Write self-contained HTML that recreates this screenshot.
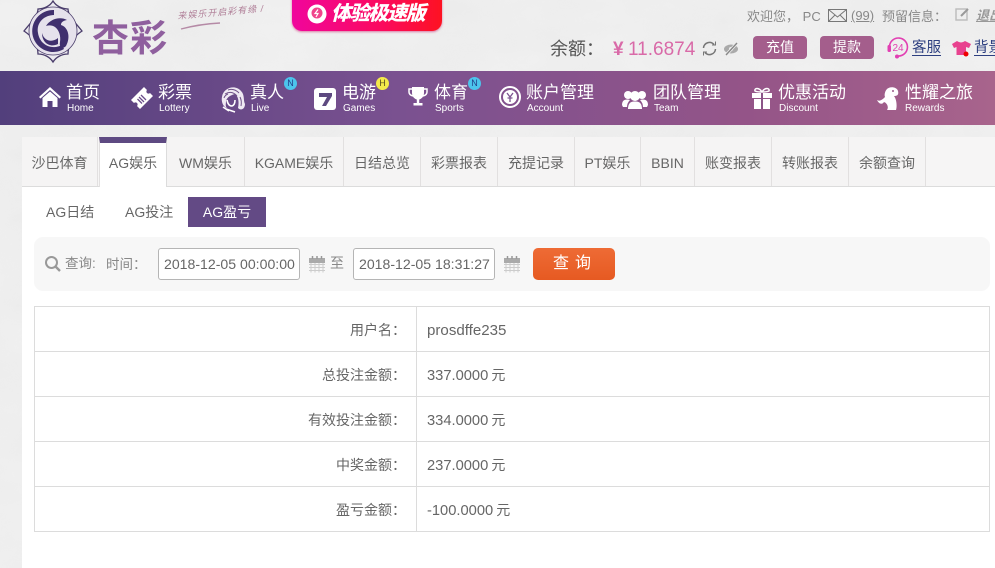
<!DOCTYPE html>
<html lang="zh"><head><meta charset="utf-8">
<style>
*{box-sizing:border-box}
html,body{margin:0;padding:0}
body{width:995px;height:568px;overflow:hidden;position:relative;background:#ececec;font-family:"Liberation Sans","Noto Sans CJK SC",sans-serif;color:#666}
.a{position:absolute;white-space:nowrap}
.c{font-family:"Noto Sans CJK TC",sans-serif}
#nav{left:0;top:71px;width:995px;height:54px;background:linear-gradient(90deg,#523f7c 0%,#7a5190 40%,#945488 75%,#a8648c 100%)}
.n1{position:absolute;top:81px;font-size:17px;line-height:24px;color:#fff}
.n2{position:absolute;top:102px;font-size:10px;line-height:14px;color:#fff}
.tab{position:absolute;top:137px;height:49px;border-right:1px solid #e2e0e0;text-align:center;line-height:52px;font-size:14px;color:#666;background:#f5f4f4;white-space:nowrap}
.badge{position:absolute;width:13px;height:13px;border-radius:50%;font-size:9px;line-height:13px;text-align:center;color:#23408a;background:#4cc4ec}
.row{position:absolute;left:34px;width:956px;height:46px;border:1px solid #dcdcdc;font-size:14px;color:#666}
.lab{position:absolute;right:583px;top:0;line-height:46px;white-space:nowrap}
.val{position:absolute;left:392px;top:1px;line-height:45px;white-space:nowrap;font-size:14.700px}
.val i{font-style:normal;font-size:14px;margin-left:-1px}
.inp{position:absolute;top:248px;width:142px;height:32px;border:1px solid #b5b5b5;border-radius:3px;background:#fff;font-size:14.100px;line-height:31px;padding-left:5px;color:#666;white-space:nowrap;overflow:hidden}
.btn{position:absolute;top:36px;height:23px;width:54px;border-radius:4px;background:#a45e8c;color:#fff;font-size:14px;line-height:23px;text-align:center}
</style></head><body>

<svg class="a" style="left:0;top:0" width="995" height="568">
<defs><filter id="t"><feTurbulence type="fractalNoise" baseFrequency="0.012 0.02" numOctaves="4" seed="4"/><feColorMatrix values="0 0 0 0 1 0 0 0 0 1 0 0 0 0 1 0.9 0 0 0 -0.15"/></filter></defs>
<rect width="995" height="568" filter="url(#t)" opacity=".4"/>
</svg>

<!-- logo -->
<svg class="a" style="left:22px;top:0" width="62" height="64" viewBox="0 0 62 64">
<path d="M31 1C34 6 40 9 46 9C46 15 51 20 60 31C51 37 46 44 46 54C40 54 34 57 31 62C28 57 22 54 16 54C16 44 11 37 2 31C11 20 16 15 16 9C22 9 28 6 31 1Z" fill="#eceaf0" stroke="#4a3d6b" stroke-width="1.300"/>
<circle cx="31" cy="31" r="24" fill="#e6e2ec" stroke="#4a3d6b" stroke-width=".8"/>
<path d="M32 10A21 21 0 1 0 42 49L40 45C31 50 18 46 16 33C14 22 23 15 32 15Z" fill="#40306e"/>
<path d="M24 26C28 19 38 16 45 20C40 21 39 23 39 25C46 27 49 37 44 46C40 50 37 47 38 42C39 36 37 30 33 27C30 25 27 25 24 26Z" fill="#40306e"/>
<path d="M20 33C22 41 30 43 36 38L36 44C28 48 20 43 20 33Z" fill="#40306e"/>
</svg>
<div class="a" style="left:92px;top:13px;font-size:37px;line-height:44px;font-weight:700;color:#8f5f9e;letter-spacing:1px;font-family:'Noto Sans CJK SC',sans-serif">杏彩</div>
<div class="a" style="left:178px;top:10px;font-size:9px;line-height:12px;color:#b07f98;font-style:italic;transform:rotate(-5deg);transform-origin:0 100%;letter-spacing:1px">来娱乐开启彩有缘 /</div>
<svg class="a" style="left:178px;top:19px" width="50" height="12"><path d="M3 10Q22 5 42 4" stroke="#b58aa6" stroke-width="1.400" fill="none"/></svg>

<!-- promo -->
<div class="a" style="left:292px;top:-4px;width:150px;height:35px;border-radius:0 0 10px 10px;background:linear-gradient(90deg,#f0069c,#fb0a5e 60%,#fd1222);box-shadow:0 1px 2px rgba(200,0,90,.5)"></div>
<svg class="a" style="left:306px;top:3px" width="22" height="22" viewBox="0 0 22 22"><circle cx="11" cy="11" r="9.500" fill="#fff"/><circle cx="11" cy="10" r="5.500" fill="#f0458c"/><path d="M12 6.500L9 10.500H12L10 14" stroke="#fff" stroke-width="1.200" fill="none"/></svg>
<div class="a" style="left:331px;top:1px;font-size:20px;line-height:27px;font-weight:900;font-style:italic;color:#fff;letter-spacing:-1.300px">体验极速版</div>

<!-- top right -->
<div class="a" style="left:747px;top:7px;font-size:13px;line-height:18px;color:#888">欢迎您<span class="c">，</span> PC</div>
<svg class="a" style="left:828px;top:9px" width="20" height="14"><rect x=".5" y=".5" width="18" height="12" fill="none" stroke="#777"/><path d="M.5.5L9.500 8L18.500.5M.5 12.500L7 6M18.500 12.500L12 6" fill="none" stroke="#777"/></svg>
<div class="a" style="left:851px;top:7px;font-size:13px;line-height:18px;color:#888;text-decoration:underline">(99)</div>
<div class="a" style="left:882px;top:7px;font-size:13px;line-height:18px;color:#888">预留信息<span class="c">：</span></div>
<svg class="a" style="left:955px;top:7px" width="16" height="15"><rect x="1" y="2" width="11" height="11" fill="none" stroke="#bbb" stroke-width="1.400"/><path d="M6 9L13 2" stroke="#999" stroke-width="2"/></svg>
<div class="a" style="left:976px;top:7px;font-size:13px;line-height:18px;color:#999;font-style:italic;font-weight:700;text-decoration:underline">退出</div>

<div class="a" style="left:550px;top:36px;font-size:18px;line-height:25px;color:#555">余额<span class="c">：</span></div>
<div class="a" style="left:613px;top:37px;font-size:19px;line-height:25px;color:#d96aa8;font-weight:700">¥</div>
<div class="a" style="left:628px;top:37px;font-size:19px;line-height:25px;color:#d96aa8">11.6874</div>
<svg class="a" style="left:701px;top:40px" width="17" height="17" viewBox="0 0 17 17"><path d="M2.500 8A6 6 0 0 1 13 4.500M14.500 9A6 6 0 0 1 4 12.500" fill="none" stroke="#777" stroke-width="1.500"/><path d="M11 5h3.500V1.500M6 12H2.500v3.500" fill="none" stroke="#777" stroke-width="1"/></svg>
<svg class="a" style="left:723px;top:41px" width="17" height="15" viewBox="0 0 17 15"><ellipse cx="8" cy="8" rx="7" ry="4.500" fill="#aaa"/><circle cx="8" cy="8" r="2" fill="#eee"/><path d="M3 14L14 2" stroke="#eee" stroke-width="3"/><path d="M3 14L14 2" stroke="#888" stroke-width="1.400"/></svg>
<div class="btn" style="left:753px">充值</div>
<div class="btn" style="left:820px">提款</div>
<svg class="a" style="left:886px;top:35px" width="24" height="25" viewBox="0 0 24 25"><path d="M3.500 11A9 9 0 1 1 12 21" fill="none" stroke="#e23fb2" stroke-width="1.600"/><rect x="1.500" y="10" width="3.500" height="7" rx="1.500" fill="#e23fb2"/><circle cx="11" cy="21.500" r="2" fill="#e23fb2"/><text x="6.500" y="16" font-size="10" fill="#e23fb2" font-family="Liberation Sans">24</text></svg>
<div class="a" style="left:912px;top:39px;font-size:14.500px;line-height:19px;color:#2d3f80;border-bottom:1px solid #2d3f80;height:17px">客服</div>
<svg class="a" style="left:951px;top:40px" width="21" height="18" viewBox="0 0 21 18"><path d="M6 1L1 4L3 8L5.500 7V15H15V7L18 8L20 4L14 1Q10 4 6 1Z" fill="#e8428f"/><circle cx="15" cy="14" r="2.500" fill="#e00"/></svg>
<div class="a" style="left:974px;top:39px;font-size:14.500px;line-height:19px;color:#2d3f80;border-bottom:1px solid #2d3f80;height:17px">背景</div>

<!-- nav -->
<div class="a" id="nav"></div>
<svg class="a" style="left:38px;top:86px" width="24" height="22" viewBox="0 0 24 22"><path d="M12 1L1 11L2.500 12.500L12 4L21.500 12.500L23 11Z" fill="#fff"/><path d="M4.500 12L12 5.500L19.500 12V21H14.500V15H9.500V21H4.500Z" fill="#fff"/></svg>
<div class="n1" style="left:66px">首页</div><div class="n2" style="left:67px">Home</div>
<svg class="a" style="left:130px;top:86px" width="24" height="24" viewBox="0 0 24 24"><path d="M1 14L14 1L17 4A2 2 0 0 0 20 7L23 10L10 23L7 20A2 2 0 0 0 4 17Z" fill="#fff"/><path d="M9 11L14 16M11 9L16 14M7.500 13L12 17.500" stroke="#6a4c8a" stroke-width="1.300"/></svg>
<div class="n1" style="left:158px">彩票</div><div class="n2" style="left:159px">Lottery</div>
<svg class="a" style="left:220px;top:85px" width="26" height="28" viewBox="0 0 26 28"><path d="M2 12C3 3 15 -1 21 6C25 10 23 15 25 19C25 24 21 26 18 23C19 18 19 12 15 9C11 10 7 12 6 16C6 19 5 21 7 23C3 22 1 16 2 12Z" fill="#efe9f3"/><path d="M7 15Q8 21 12 21Q15 20 15 15M6 24L15 27M3 22L9 26" stroke="#fff" stroke-width="1.600" fill="none"/><path d="M8 5Q14 3 19 8M5 9Q12 5 17 11M20 12Q22 16 21 21M4 13Q5 10 8 9" stroke="#6f5288" fill="none"/></svg>
<div class="n1" style="left:250px">真人</div><div class="n2" style="left:251px">Live</div>
<div class="badge" style="left:284px;top:77px">N</div>
<div class="a" style="left:314px;top:88px;width:22px;height:22px;border-radius:3px;background:#fff"></div>
<svg class="a" style="left:314px;top:88px" width="22" height="22" viewBox="0 0 22 22"><path d="M5 5H18V8L12 18H8L13 9H5Z" fill="#5d4980"/></svg>
<div class="n1" style="left:342px">电游</div><div class="n2" style="left:343px">Games</div>
<div class="badge" style="left:376px;top:77px;background:#f3e94a;color:#5a4a20">H</div>
<svg class="a" style="left:408px;top:86px" width="20" height="22" viewBox="0 0 20 22"><path d="M4 1H16V7C16 11 13 13 11.200 13.500V17H14.500V19.500H5.500V17H8.800V13.500C7 13 4 11 4 7Z" fill="#fff"/><path d="M4 3H1V6Q1 9 5 10M16 3H19V6Q19 9 15 10" stroke="#fff" stroke-width="1.500" fill="none"/></svg>
<div class="n1" style="left:434px">体育</div><div class="n2" style="left:435px">Sports</div>
<div class="badge" style="left:468px;top:77px">N</div>
<svg class="a" style="left:498px;top:85px" width="24" height="24" viewBox="0 0 24 24"><circle cx="12" cy="12" r="10" fill="none" stroke="#fff" stroke-width="2"/><circle cx="12" cy="12" r="7" fill="#fff"/><path d="M9 8L12 12L15 8M12 12V17M9.500 13H14.500" stroke="#7c5490" stroke-width="1.300" fill="none"/></svg>
<div class="n1" style="left:526px">账户管理</div><div class="n2" style="left:527px">Account</div>
<svg class="a" style="left:622px;top:88px" width="26" height="22" viewBox="0 0 26 22"><circle cx="6" cy="7" r="4" fill="#fff"/><circle cx="20" cy="7" r="4" fill="#fff"/><circle cx="13" cy="8" r="5" fill="#fff"/><path d="M0 17Q0 11 6 11.500L8 12Q5 15 5 19H1ZM26 17Q26 11 20 11.500L18 12Q21 15 21 19H25Z" fill="#fff"/><path d="M6 21Q6 13 13 13.500Q20 13 20 21Z" fill="#fff"/></svg>
<div class="n1" style="left:653px">团队管理</div><div class="n2" style="left:654px">Team</div>
<svg class="a" style="left:751px;top:87px" width="22" height="23" viewBox="0 0 22 23"><path d="M1 6H21V11H1ZM3 12H19V22H3Z" fill="#fff"/><path d="M11 5V22" stroke="#8b5488" stroke-width="2"/><path d="M11 5C8 0 3 1 4 4Q6 5 11 5C14 0 19 1 18 4Q16 5 11 5Z" fill="none" stroke="#fff" stroke-width="1.500"/></svg>
<div class="n1" style="left:778px">优惠活动</div><div class="n2" style="left:779px">Discount</div>
<svg class="a" style="left:876px;top:86px" width="26" height="25" viewBox="0 0 26 25"><path d="M11 3C14 0 21 1 22 5C23 9 21 10 18 10C21 14 21 21 20 24H11C13 21 11 17 8 16C6 19 3 18 1 14C4 16 7 13 9 11C8 9 9 5 11 3Z" fill="#fff"/><circle cx="17" cy="5" r="1" fill="#9a5a88"/></svg>
<div class="n1" style="left:905px">性耀之旅</div><div class="n2" style="left:905px">Rewards</div>

<!-- content panel -->
<div class="a" style="left:22px;top:137px;width:973px;height:431px;background:#fff"></div>
<div class="a" style="left:22px;top:137px;width:973px;height:50px;background:#f6f5f5;border-bottom:1px solid #dcdcdc"></div>
<div class="tab" style="left:22px;width:76px">沙巴体育</div>
<div class="tab" style="left:99px;width:68px;height:50px;background:#fff;border-top:6px solid #5e4a82;border-left:1px solid #e2e0e0;border-right:1px solid #dcdcdc;line-height:40px">AG娱乐</div>
<div class="tab" style="left:167px;width:78px">WM娱乐</div>
<div class="tab" style="left:245px;width:99px">KGAME娱乐</div>
<div class="tab" style="left:344px;width:77px">日结总览</div>
<div class="tab" style="left:421px;width:77px">彩票报表</div>
<div class="tab" style="left:498px;width:77px">充提记录</div>
<div class="tab" style="left:575px;width:66px">PT娱乐</div>
<div class="tab" style="left:641px;width:54px">BBIN</div>
<div class="tab" style="left:695px;width:77px">账变报表</div>
<div class="tab" style="left:772px;width:77px">转账报表</div>
<div class="tab" style="left:849px;width:77px">余额查询</div>

<!-- sub tabs -->
<div class="a" style="left:46px;top:197px;font-size:14px;line-height:30px;color:#666">AG日结</div>
<div class="a" style="left:125px;top:197px;font-size:14px;line-height:30px;color:#666">AG投注</div>
<div class="a" style="left:188px;top:197px;width:78px;height:30px;background:#634a85;color:#fff;font-size:14px;line-height:30px;text-align:center">AG盈亏</div>

<!-- query bar -->
<div class="a" style="left:34px;top:237px;width:956px;height:54px;border-radius:9px;background:#f7f7f7"></div>
<svg class="a" style="left:44px;top:255px" width="18" height="18" viewBox="0 0 18 18"><circle cx="7.500" cy="7.500" r="5.500" fill="none" stroke="#999" stroke-width="2"/><path d="M11.500 11.500L16 16" stroke="#999" stroke-width="2.400"/></svg>
<div class="a" style="left:65px;top:255px;font-size:13.500px;line-height:18px;color:#888">查询:</div>
<div class="a" style="left:106px;top:254px;font-size:13.500px;line-height:18px;color:#888">时间<span class="c">：</span></div>
<div class="inp" style="left:158px">2018-12-05 00:00:00</div>
<svg class="a" style="left:309px;top:256px" width="16" height="17" viewBox="0 0 16 17"><rect x="0" y="2" width="16" height="5" fill="#aaa"/><path d="M3.500 0V3M8 0V3M12.500 0V3" stroke="#999" stroke-width="1.500"/><path d="M0 8.500H16M0 11.500H16M0 14.500H16M2 7V16.500M6 7V16.500M10 7V16.500M14 7V16.500" stroke="#ccc"/></svg>
<div class="a" style="left:330px;top:254px;font-size:14px;line-height:18px;color:#888">至</div>
<div class="inp" style="left:353px">2018-12-05 18:31:27</div>
<svg class="a" style="left:504px;top:256px" width="16" height="17" viewBox="0 0 16 17"><rect x="0" y="2" width="16" height="5" fill="#aaa"/><path d="M3.500 0V3M8 0V3M12.500 0V3" stroke="#999" stroke-width="1.500"/><path d="M0 8.500H16M0 11.500H16M0 14.500H16M2 7V16.500M6 7V16.500M10 7V16.500M14 7V16.500" stroke="#ccc"/></svg>
<div class="a" style="left:533px;top:248px;width:82px;height:32px;border-radius:5px;background:linear-gradient(180deg,#ee6b35,#e65a22);color:#fff;font-size:16px;line-height:32px;text-align:center;letter-spacing:6px;padding-left:2px">查询</div>

<!-- table -->
<div class="row" style="top:306px"><span class="lab">用户名<span class="c">：</span></span><span class="val" style="font-size:15.100px">prosdffe235</span></div>
<div class="row" style="top:351px"><span class="lab">总投注金额<span class="c">：</span></span><span class="val">337.0000 <i>元</i></span></div>
<div class="row" style="top:396px"><span class="lab">有效投注金额<span class="c">：</span></span><span class="val">334.0000 <i>元</i></span></div>
<div class="row" style="top:441px"><span class="lab">中奖金额<span class="c">：</span></span><span class="val">237.0000 <i>元</i></span></div>
<div class="row" style="top:486px"><span class="lab">盈亏金额<span class="c">：</span></span><span class="val">-100.0000 <i>元</i></span></div>
<div class="a" style="left:416px;top:306px;width:1px;height:226px;background:#dcdcdc"></div>

</body></html>
